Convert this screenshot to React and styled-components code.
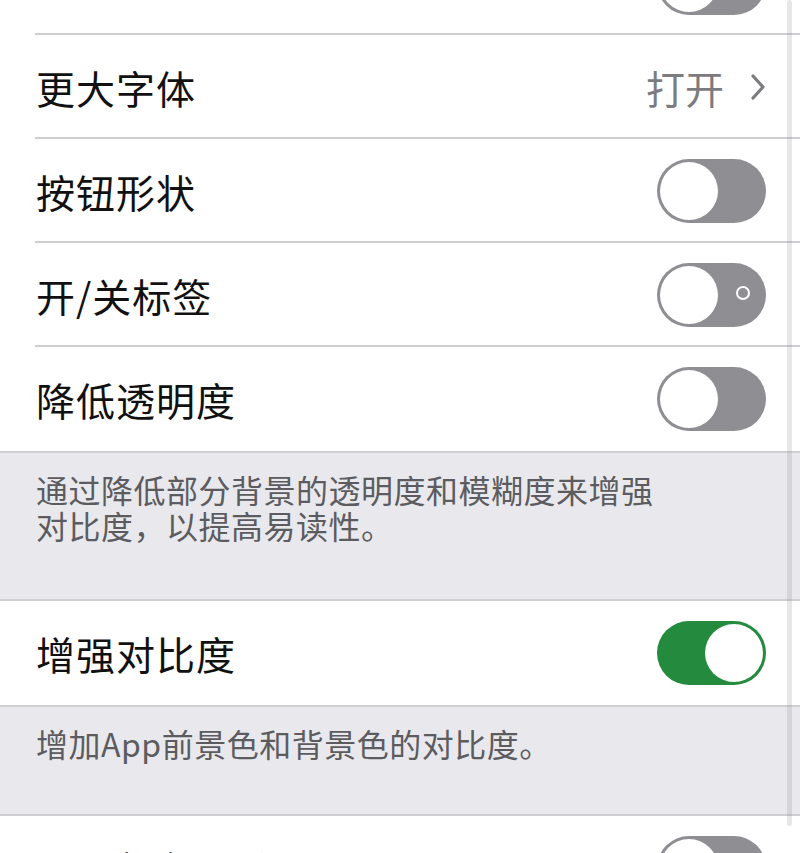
import React from 'react';
import styled, { createGlobalStyle } from 'styled-components';

const GlobalStyle = createGlobalStyle`
    html, body {
        margin: 0;
        padding: 0;
        height: 853px;
        overflow: hidden;
        background: #fff;
    }
    body {
        font-family: "Noto Sans CJK SC", "Noto Sans", sans-serif;
        -webkit-font-smoothing: antialiased;
    }
`;

const Screen = styled.div`
    position: relative;
    width: 800px;
    height: 853px;
    overflow: hidden;
`;

// list is scrolled, the first row sits mostly above the top edge
const List = styled.div`
    margin-top: -69px;
    display: flex;
    flex-direction: column;
`;

const Group = styled.div`
    background: #fff;
`;

const Row = styled.div`
    position: relative;
    height: 104px;
    display: flex;
    align-items: center;
    justify-content: space-between;
    padding: 0 34px 0 36px;
    box-sizing: border-box;
    &:not(:last-child)::after {
        content: '';
        position: absolute;
        left: 35px;
        right: 0;
        bottom: 0;
        height: 2px;
        background: #cfcfd3;
    }
`;

const Label = styled.div`
    font-size: 39px;
    color: #111;
    letter-spacing: 1px;
`;

const Value = styled.div`
    display: flex;
    align-items: center;
    gap: 26px;
    font-size: 39px;
    color: #7c7c80;
`;

const Footer = styled.div`
    background: #e9e9ed;
    border-top: 2px solid #cfcfd3;
    border-bottom: 2px solid #cfcfd3;
    box-sizing: border-box;
    height: ${({ h }) => h}px;
    padding: 18px 130px 0 36px;
    font-size: 32px;
    line-height: 36px;
    letter-spacing: 0.5px;
    color: #5c5c60;
`;

const Track = styled.div`
    position: relative;
    width: 109px;
    height: 64px;
    border-radius: 32px;
    background: ${({ on }) => (on ? '#248a3d' : '#8e8e93')};
    flex-shrink: 0;
`;

const Knob = styled.div`
    position: absolute;
    top: 3px;
    left: ${({ on }) => (on ? '48px' : '3px')};
    width: 58px;
    height: 58px;
    border-radius: 50%;
    background: #fff;
`;

const OffMark = styled.div`
    position: absolute;
    right: 16px;
    top: 23px;
    width: 14px;
    height: 14px;
    border-radius: 50%;
    border: 2px solid #fff;
    box-sizing: border-box;
`;

const ScrollIndicator = styled.div`
    position: absolute;
    top: 0;
    right: 8px;
    width: 5px;
    height: 826px;
    border-radius: 3px;
    background: rgba(120, 120, 128, 0.18);
`;

const Toggle = ({ on, labels }) => (
    <Track on={on}>
        {labels && !on && <OffMark />}
        <Knob on={on} />
    </Track>
);

const Chevron = () => (
    <svg width="16" height="28" viewBox="0 0 16 28" fill="none">
        <path d="M3 3 L13 14 L3 25" stroke="#7c7c80" strokeWidth="3.2" strokeLinecap="round" strokeLinejoin="round" />
    </svg>
);

export default () => {
    return <Screen>
        <GlobalStyle />
        <List>
            <Group>
                <Row>
                    <Label />
                    <Toggle />
                </Row>
                <Row>
                    <Label>更大字体</Label>
                    <Value>打开<Chevron /></Value>
                </Row>
                <Row>
                    <Label>按钮形状</Label>
                    <Toggle />
                </Row>
                <Row>
                    <Label>开/关标签</Label>
                    <Toggle labels />
                </Row>
                <Row>
                    <Label>降低透明度</Label>
                    <Toggle />
                </Row>
            </Group>
            <Footer h={150}>通过降低部分背景的透明度和模糊度来增强对比度，以提高易读性。</Footer>
            <Group>
                <Row>
                    <Label>增强对比度</Label>
                    <Toggle on />
                </Row>
            </Group>
            <Footer h={111}>增加App前景色和背景色的对比度。</Footer>
            <Group>
                <Row>
                    <Label>不以颜色区分</Label>
                    <Toggle />
                </Row>
            </Group>
        </List>
        <ScrollIndicator />
    </Screen>
}
